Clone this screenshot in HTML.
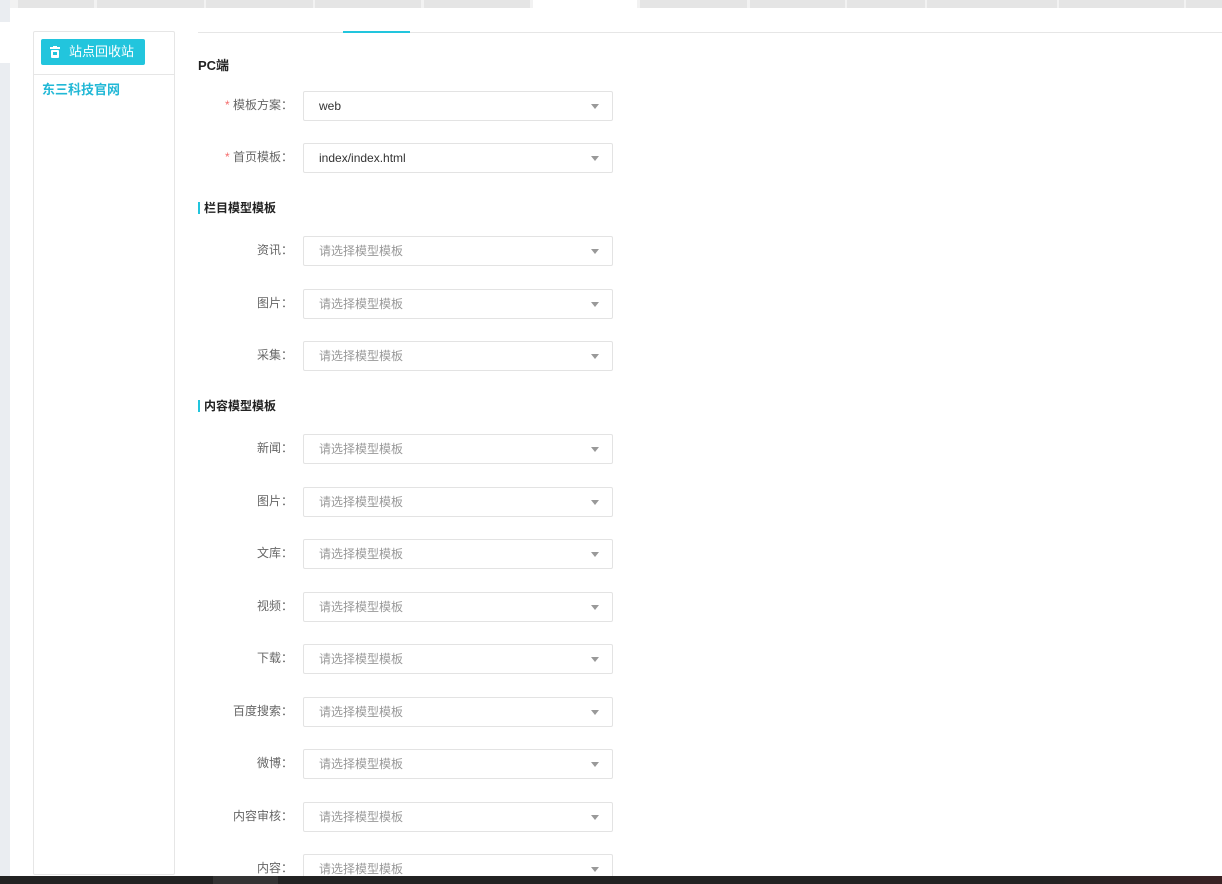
<!DOCTYPE html>
<html><head><meta charset="utf-8"><style>
*{margin:0;padding:0;box-sizing:border-box}
body{width:1222px;height:884px;overflow:hidden;background:#fff;position:relative;font-family:"Liberation Sans","Noto Sans CJK SC",sans-serif;font-size:12px;color:#333}
.a{position:absolute}
.tab{position:absolute;top:0;height:8px;background:#e5e5e5}
.lbl{position:absolute;width:130px;left:163px;text-align:right;color:#666;font-size:12px;line-height:30px}
.sel{position:absolute;left:303px;width:310px;height:30px;border:1px solid #e3e3e3;border-radius:2px;line-height:28px;padding-left:15px;color:#999;font-size:12px}
.sel:after{content:"";position:absolute;right:13px;top:12px;border:4px solid transparent;border-top:5px solid #999}
.sel.v{color:#333}
.star{color:#f56c6c}
.h{position:absolute;left:198px;font-weight:bold;font-size:12px;color:#222;border-left:2px solid #22c5dd;padding-left:4px;line-height:12px}
</style></head><body>
<div class="a" style="left:0;top:0;width:10px;height:884px;background:#eaedf1"></div>
<div class="a" style="left:0;top:22px;width:10px;height:41px;background:#fff"></div>
<div class="a" style="left:10px;top:0;width:1212px;height:8px;background:#f2f2f2"></div>
<div class="tab" style="left:18px;width:76px"></div>
<div class="tab" style="left:97px;width:107px"></div>
<div class="tab" style="left:206px;width:107px"></div>
<div class="tab" style="left:315px;width:106px"></div>
<div class="tab" style="left:424px;width:106px"></div>
<div class="tab" style="left:533px;width:104px;background:#fff"></div>
<div class="tab" style="left:640px;width:107px"></div>
<div class="tab" style="left:750px;width:95px"></div>
<div class="tab" style="left:847px;width:78px"></div>
<div class="tab" style="left:927px;width:130px"></div>
<div class="tab" style="left:1059px;width:125px"></div>
<div class="tab" style="left:1186px;width:36px"></div>

<div class="a" style="left:33px;top:31px;width:142px;height:844px;border:1px solid #e6e6e6;border-radius:2px"></div>
<div class="a" style="left:41px;top:39px;width:104px;height:26px;background:#22c5dd;border-radius:2px;color:#fff;font-size:13px;line-height:26px;padding-left:28px">站点回收站</div>
<svg class="a" style="left:50px;top:46px" width="10" height="12" viewBox="0 0 10 12"><rect x="0" y="1" width="10" height="2" fill="#fff"/><rect x="3" y="0" width="4" height="1.5" fill="#fff"/><rect x="1" y="4" width="8" height="8" rx="1" fill="#fff"/><rect x="3" y="6" width="4" height="3" fill="#22c5dd"/></svg>
<div class="a" style="left:34px;top:74px;width:140px;height:1px;background:#e6e6e6"></div>
<div class="a" style="left:42px;top:82px;color:#22b8d6;font-weight:bold;font-size:13px;line-height:16px">东三科技官网</div>

<div class="a" style="left:198px;top:32px;width:1024px;height:1px;background:#e6e6e6"></div>
<div class="a" style="left:343px;top:31px;width:67px;height:2px;background:#22c5dd"></div>

<div class="a" style="left:198px;top:55px;font-weight:bold;font-size:13px;color:#222">PC端</div>

<div class="lbl" style="top:90px"><span class="star">* </span>模板方案：</div><div class="sel v" style="top:91px">web</div>
<div class="lbl" style="top:142px"><span class="star">* </span>首页模板：</div><div class="sel v" style="top:143px">index/index.html</div>

<div class="h" style="top:202px">栏目模型模板</div>
<div class="lbl" style="top:235px">资讯：</div><div class="sel" style="top:236px">请选择模型模板</div>
<div class="lbl" style="top:288px">图片：</div><div class="sel" style="top:289px">请选择模型模板</div>
<div class="lbl" style="top:340px">采集：</div><div class="sel" style="top:341px">请选择模型模板</div>

<div class="h" style="top:400px">内容模型模板</div>
<div class="lbl" style="top:433px">新闻：</div><div class="sel" style="top:434px">请选择模型模板</div>
<div class="lbl" style="top:486px">图片：</div><div class="sel" style="top:487px">请选择模型模板</div>
<div class="lbl" style="top:538px">文库：</div><div class="sel" style="top:539px">请选择模型模板</div>
<div class="lbl" style="top:591px">视频：</div><div class="sel" style="top:592px">请选择模型模板</div>
<div class="lbl" style="top:643px">下载：</div><div class="sel" style="top:644px">请选择模型模板</div>
<div class="lbl" style="top:696px">百度搜索：</div><div class="sel" style="top:697px">请选择模型模板</div>
<div class="lbl" style="top:748px">微博：</div><div class="sel" style="top:749px">请选择模型模板</div>
<div class="lbl" style="top:801px">内容审核：</div><div class="sel" style="top:802px">请选择模型模板</div>
<div class="lbl" style="top:853px">内容：</div><div class="sel" style="top:854px">请选择模型模板</div>

<div class="a" style="left:0;top:876px;width:1222px;height:8px;background:linear-gradient(90deg,#222 0,#222 85%,#3a2224 100%)"></div>
<div class="a" style="left:213px;top:876px;width:65px;height:8px;background:#333"></div>
</body></html>
